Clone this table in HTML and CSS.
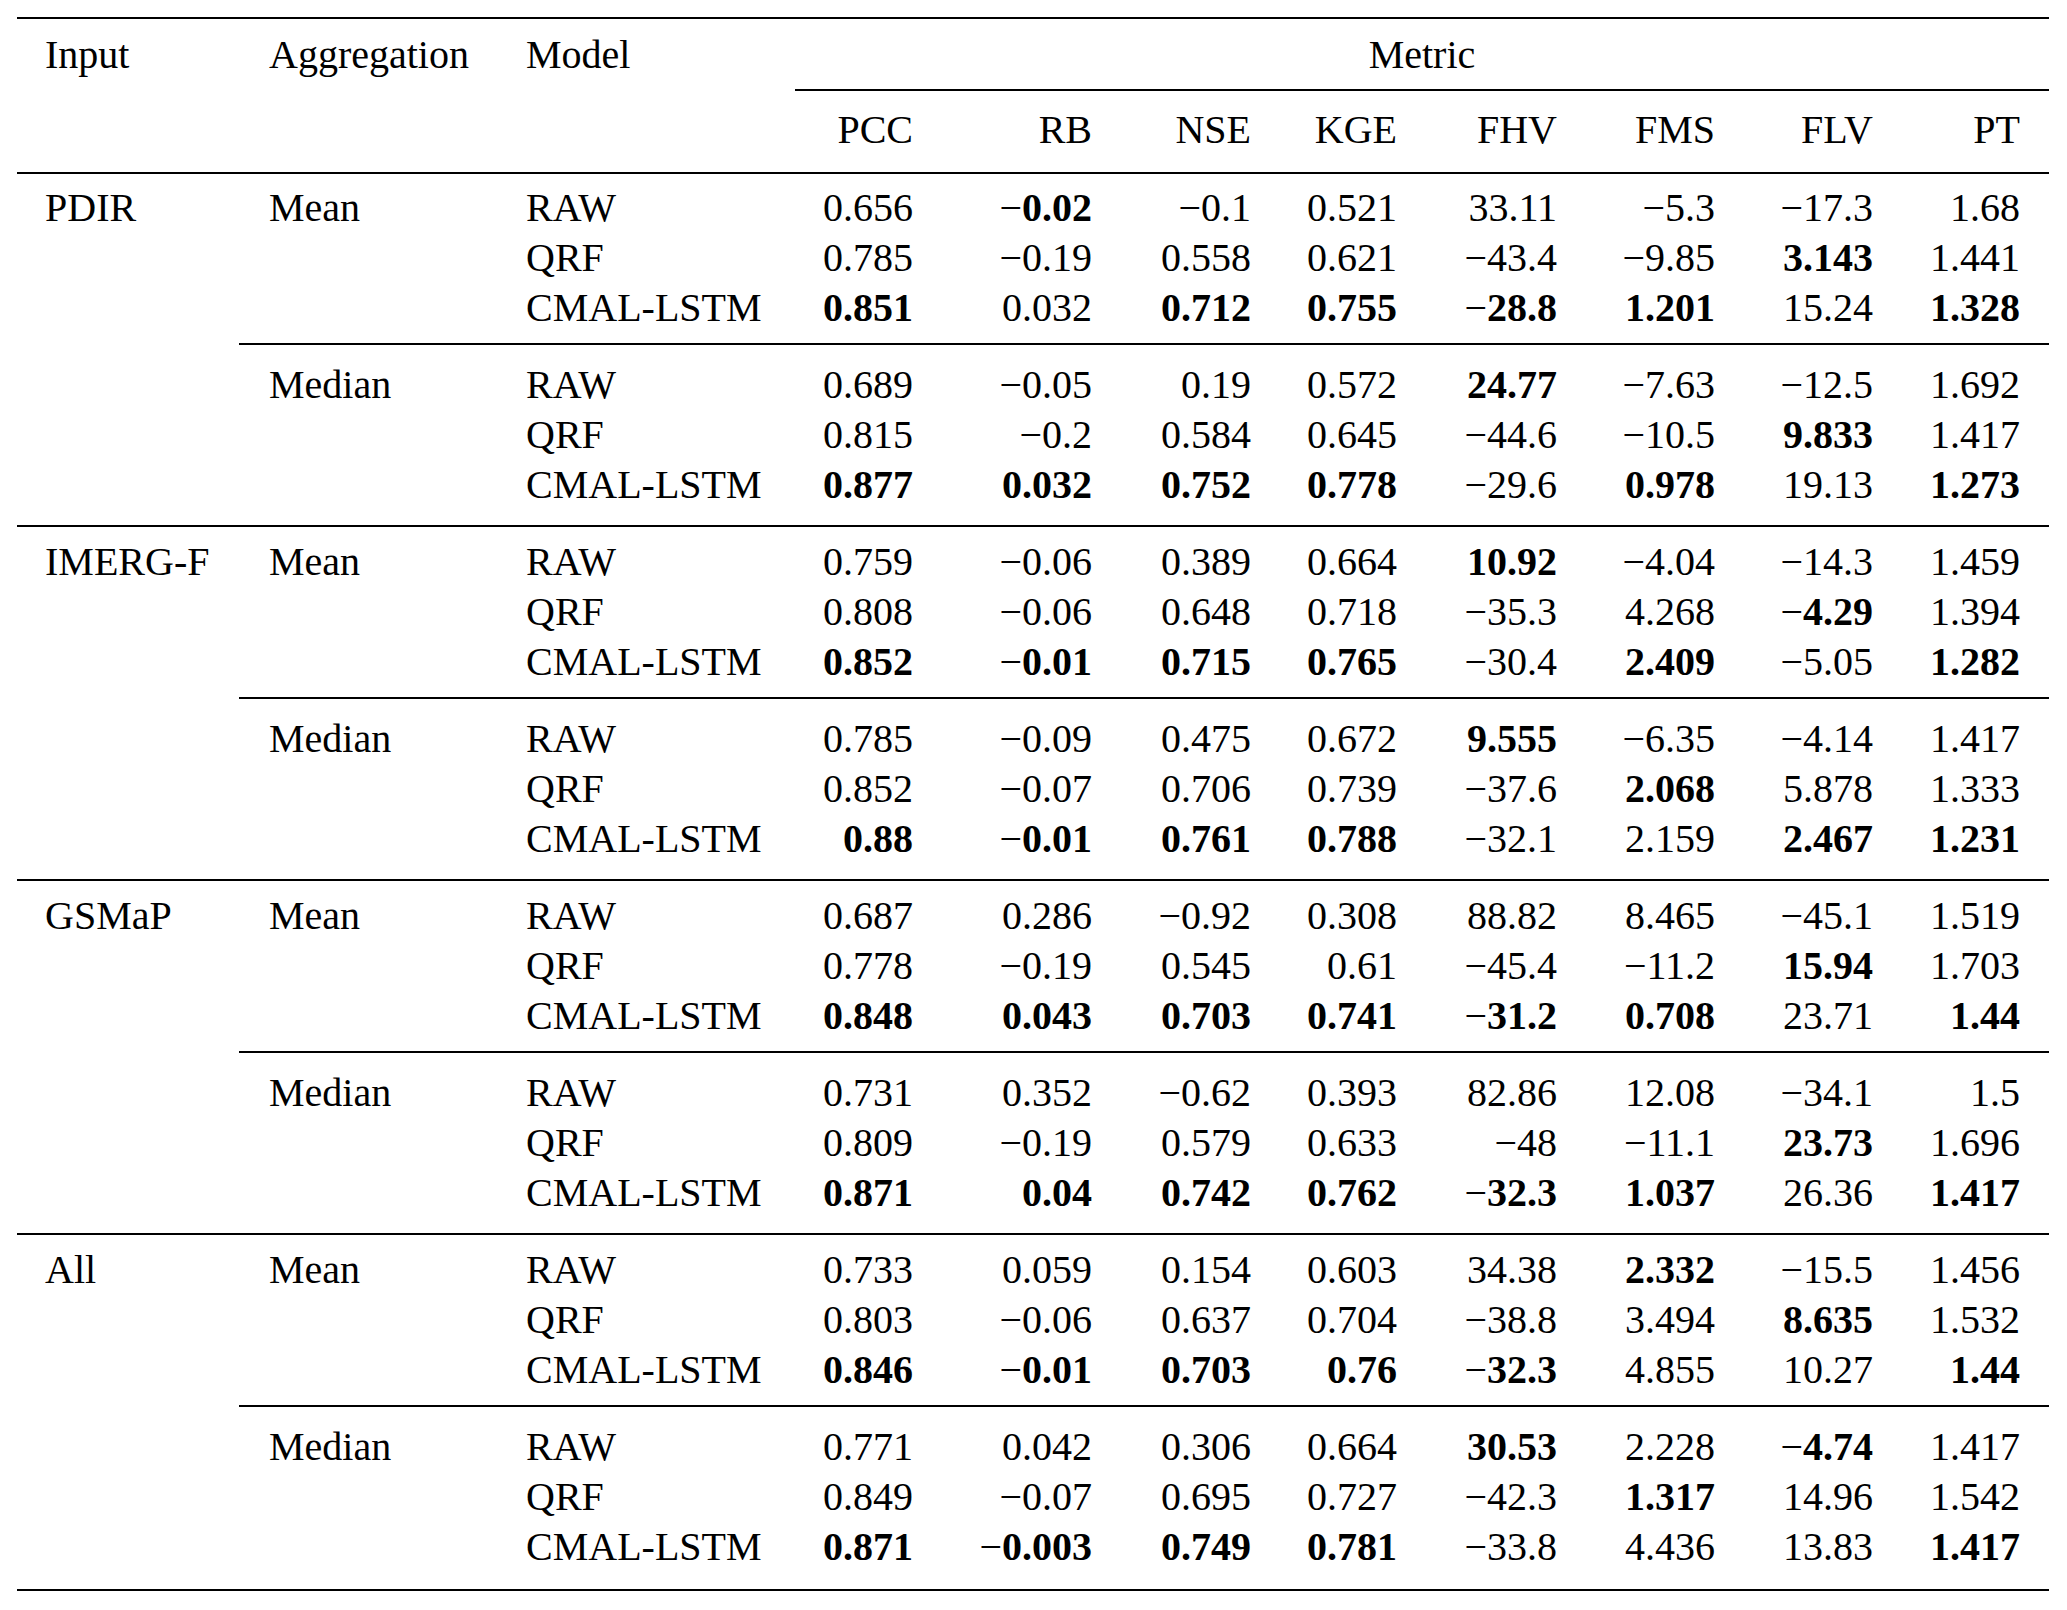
FILE: index.html
```html
<!DOCTYPE html>
<html lang="en">
<head>
<meta charset="utf-8">
<title>Metric table</title>
<link rel="stylesheet" href="styles.css">
</head>
<body>
<table class="tbl">
  <colgroup>
    <col class="w-input"><col class="w-agg"><col class="w-model">
    <col class="w-pcc"><col class="w-rb"><col class="w-nse"><col class="w-kge">
    <col class="w-fhv"><col class="w-fms"><col class="w-flv"><col class="w-pt">
  </colgroup>
  <thead>
    <tr class="h1">
      <th class="c1">Input</th><th class="c2">Aggregation</th><th class="c3">Model</th>
      <th class="metric" colspan="8">Metric</th>
    </tr>
    <tr class="h2">
      <th class="c1"></th><th class="c2"></th><th class="c3"></th>
      <th class="n">PCC</th><th class="n">RB</th><th class="n">NSE</th><th class="n">KGE</th>
      <th class="n">FHV</th><th class="n">FMS</th><th class="n">FLV</th><th class="n last-col">PT</th>
    </tr>
  </thead>
  <tbody>
    <!-- PDIR -->
    <tr class="first">
      <td class="c1">PDIR</td><td class="c2">Mean</td><td class="c3">RAW</td>
      <td class="n">0.656</td><td class="n">−<b>0.02</b></td><td class="n">−0.1</td><td class="n">0.521</td><td class="n">33.11</td><td class="n">−5.3</td><td class="n">−17.3</td><td class="n last-col">1.68</td>
    </tr>
    <tr>
      <td class="c1"></td><td class="c2"></td><td class="c3">QRF</td>
      <td class="n">0.785</td><td class="n">−0.19</td><td class="n">0.558</td><td class="n">0.621</td><td class="n">−43.4</td><td class="n">−9.85</td><td class="n"><b>3.143</b></td><td class="n last-col">1.441</td>
    </tr>
    <tr class="pre-cmid">
      <td class="c1"></td><td class="c2"></td><td class="c3">CMAL-LSTM</td>
      <td class="n"><b>0.851</b></td><td class="n">0.032</td><td class="n"><b>0.712</b></td><td class="n"><b>0.755</b></td><td class="n">−<b>28.8</b></td><td class="n"><b>1.201</b></td><td class="n">15.24</td><td class="n last-col"><b>1.328</b></td>
    </tr>
    <tr class="cmid">
      <td class="c1"></td><td class="c2">Median</td><td class="c3">RAW</td>
      <td class="n">0.689</td><td class="n">−0.05</td><td class="n">0.19</td><td class="n">0.572</td><td class="n"><b>24.77</b></td><td class="n">−7.63</td><td class="n">−12.5</td><td class="n last-col">1.692</td>
    </tr>
    <tr>
      <td class="c1"></td><td class="c2"></td><td class="c3">QRF</td>
      <td class="n">0.815</td><td class="n">−0.2</td><td class="n">0.584</td><td class="n">0.645</td><td class="n">−44.6</td><td class="n">−10.5</td><td class="n"><b>9.833</b></td><td class="n last-col">1.417</td>
    </tr>
    <tr class="pre-mid">
      <td class="c1"></td><td class="c2"></td><td class="c3">CMAL-LSTM</td>
      <td class="n"><b>0.877</b></td><td class="n"><b>0.032</b></td><td class="n"><b>0.752</b></td><td class="n"><b>0.778</b></td><td class="n">−29.6</td><td class="n"><b>0.978</b></td><td class="n">19.13</td><td class="n last-col"><b>1.273</b></td>
    </tr>
    <!-- IMERG-F -->
    <tr class="mid">
      <td class="c1">IMERG-F</td><td class="c2">Mean</td><td class="c3">RAW</td>
      <td class="n">0.759</td><td class="n">−0.06</td><td class="n">0.389</td><td class="n">0.664</td><td class="n"><b>10.92</b></td><td class="n">−4.04</td><td class="n">−14.3</td><td class="n last-col">1.459</td>
    </tr>
    <tr>
      <td class="c1"></td><td class="c2"></td><td class="c3">QRF</td>
      <td class="n">0.808</td><td class="n">−0.06</td><td class="n">0.648</td><td class="n">0.718</td><td class="n">−35.3</td><td class="n">4.268</td><td class="n">−<b>4.29</b></td><td class="n last-col">1.394</td>
    </tr>
    <tr class="pre-cmid">
      <td class="c1"></td><td class="c2"></td><td class="c3">CMAL-LSTM</td>
      <td class="n"><b>0.852</b></td><td class="n">−<b>0.01</b></td><td class="n"><b>0.715</b></td><td class="n"><b>0.765</b></td><td class="n">−30.4</td><td class="n"><b>2.409</b></td><td class="n">−5.05</td><td class="n last-col"><b>1.282</b></td>
    </tr>
    <tr class="cmid">
      <td class="c1"></td><td class="c2">Median</td><td class="c3">RAW</td>
      <td class="n">0.785</td><td class="n">−0.09</td><td class="n">0.475</td><td class="n">0.672</td><td class="n"><b>9.555</b></td><td class="n">−6.35</td><td class="n">−4.14</td><td class="n last-col">1.417</td>
    </tr>
    <tr>
      <td class="c1"></td><td class="c2"></td><td class="c3">QRF</td>
      <td class="n">0.852</td><td class="n">−0.07</td><td class="n">0.706</td><td class="n">0.739</td><td class="n">−37.6</td><td class="n"><b>2.068</b></td><td class="n">5.878</td><td class="n last-col">1.333</td>
    </tr>
    <tr class="pre-mid">
      <td class="c1"></td><td class="c2"></td><td class="c3">CMAL-LSTM</td>
      <td class="n"><b>0.88</b></td><td class="n">−<b>0.01</b></td><td class="n"><b>0.761</b></td><td class="n"><b>0.788</b></td><td class="n">−32.1</td><td class="n">2.159</td><td class="n"><b>2.467</b></td><td class="n last-col"><b>1.231</b></td>
    </tr>
    <!-- GSMaP -->
    <tr class="mid">
      <td class="c1">GSMaP</td><td class="c2">Mean</td><td class="c3">RAW</td>
      <td class="n">0.687</td><td class="n">0.286</td><td class="n">−0.92</td><td class="n">0.308</td><td class="n">88.82</td><td class="n">8.465</td><td class="n">−45.1</td><td class="n last-col">1.519</td>
    </tr>
    <tr>
      <td class="c1"></td><td class="c2"></td><td class="c3">QRF</td>
      <td class="n">0.778</td><td class="n">−0.19</td><td class="n">0.545</td><td class="n">0.61</td><td class="n">−45.4</td><td class="n">−11.2</td><td class="n"><b>15.94</b></td><td class="n last-col">1.703</td>
    </tr>
    <tr class="pre-cmid">
      <td class="c1"></td><td class="c2"></td><td class="c3">CMAL-LSTM</td>
      <td class="n"><b>0.848</b></td><td class="n"><b>0.043</b></td><td class="n"><b>0.703</b></td><td class="n"><b>0.741</b></td><td class="n">−<b>31.2</b></td><td class="n"><b>0.708</b></td><td class="n">23.71</td><td class="n last-col"><b>1.44</b></td>
    </tr>
    <tr class="cmid">
      <td class="c1"></td><td class="c2">Median</td><td class="c3">RAW</td>
      <td class="n">0.731</td><td class="n">0.352</td><td class="n">−0.62</td><td class="n">0.393</td><td class="n">82.86</td><td class="n">12.08</td><td class="n">−34.1</td><td class="n last-col">1.5</td>
    </tr>
    <tr>
      <td class="c1"></td><td class="c2"></td><td class="c3">QRF</td>
      <td class="n">0.809</td><td class="n">−0.19</td><td class="n">0.579</td><td class="n">0.633</td><td class="n">−48</td><td class="n">−11.1</td><td class="n"><b>23.73</b></td><td class="n last-col">1.696</td>
    </tr>
    <tr class="pre-mid">
      <td class="c1"></td><td class="c2"></td><td class="c3">CMAL-LSTM</td>
      <td class="n"><b>0.871</b></td><td class="n"><b>0.04</b></td><td class="n"><b>0.742</b></td><td class="n"><b>0.762</b></td><td class="n">−<b>32.3</b></td><td class="n"><b>1.037</b></td><td class="n">26.36</td><td class="n last-col"><b>1.417</b></td>
    </tr>
    <!-- All -->
    <tr class="mid">
      <td class="c1">All</td><td class="c2">Mean</td><td class="c3">RAW</td>
      <td class="n">0.733</td><td class="n">0.059</td><td class="n">0.154</td><td class="n">0.603</td><td class="n">34.38</td><td class="n"><b>2.332</b></td><td class="n">−15.5</td><td class="n last-col">1.456</td>
    </tr>
    <tr>
      <td class="c1"></td><td class="c2"></td><td class="c3">QRF</td>
      <td class="n">0.803</td><td class="n">−0.06</td><td class="n">0.637</td><td class="n">0.704</td><td class="n">−38.8</td><td class="n">3.494</td><td class="n"><b>8.635</b></td><td class="n last-col">1.532</td>
    </tr>
    <tr class="pre-cmid">
      <td class="c1"></td><td class="c2"></td><td class="c3">CMAL-LSTM</td>
      <td class="n"><b>0.846</b></td><td class="n">−<b>0.01</b></td><td class="n"><b>0.703</b></td><td class="n"><b>0.76</b></td><td class="n">−<b>32.3</b></td><td class="n">4.855</td><td class="n">10.27</td><td class="n last-col"><b>1.44</b></td>
    </tr>
    <tr class="cmid">
      <td class="c1"></td><td class="c2">Median</td><td class="c3">RAW</td>
      <td class="n">0.771</td><td class="n">0.042</td><td class="n">0.306</td><td class="n">0.664</td><td class="n"><b>30.53</b></td><td class="n">2.228</td><td class="n">−<b>4.74</b></td><td class="n last-col">1.417</td>
    </tr>
    <tr>
      <td class="c1"></td><td class="c2"></td><td class="c3">QRF</td>
      <td class="n">0.849</td><td class="n">−0.07</td><td class="n">0.695</td><td class="n">0.727</td><td class="n">−42.3</td><td class="n"><b>1.317</b></td><td class="n">14.96</td><td class="n last-col">1.542</td>
    </tr>
    <tr class="last">
      <td class="c1"></td><td class="c2"></td><td class="c3">CMAL-LSTM</td>
      <td class="n"><b>0.871</b></td><td class="n">−<b>0.003</b></td><td class="n"><b>0.749</b></td><td class="n"><b>0.781</b></td><td class="n">−33.8</td><td class="n">4.436</td><td class="n">13.83</td><td class="n last-col"><b>1.417</b></td>
    </tr>
  </tbody>
</table>
</body>
</html>
```

FILE: styles.css
```css
html, body {
  margin: 0;
  background: #ffffff;
}

body {
  padding: 17px 18px 0 17px;
  font-family: "Liberation Serif", "Times New Roman", Times, serif;
  font-size: 40px;
  color: #000000;
}

.tbl {
  border-collapse: separate;
  border-spacing: 0;
  table-layout: fixed;
  width: 2032px;
}

.w-input { width: 222px; }
.w-agg   { width: 259px; }
.w-model { width: 297px; }
.w-pcc   { width: 118px; }
.w-rb    { width: 179px; }
.w-nse   { width: 159px; }
.w-kge   { width: 146px; }
.w-fhv   { width: 160px; }
.w-fms   { width: 158px; }
.w-flv   { width: 158px; }
.w-pt    { width: 176px; }

.tbl th,
.tbl td {
  padding: 0;
  line-height: 50px;
  font-weight: normal;
  vertical-align: top;
  white-space: nowrap;
  text-align: left;
}

.tbl b { font-weight: bold; }

.tbl .c1 { padding-left: 28px; }
.tbl .c2 { padding-left: 30px; }
.tbl .c3 { padding-left: 28px; }
.tbl .n  { text-align: right; }
.tbl .last-col { padding-right: 29px; }

/* header */
.h1 th {
  border-top: 2px solid #000;
  padding-top: 11px;
  padding-bottom: 9px;
}
.h1 th.metric {
  text-align: center;
  border-bottom: 2px solid #000;
}
.h2 th {
  padding-top: 14px;
  padding-bottom: 17px;
  border-bottom: 2px solid #000;
}

/* body spacing and rules */
tr.first td { padding-top: 9px; }

tr.pre-cmid td { padding-bottom: 10px; }
tr.cmid td { padding-top: 15px; }
tr.cmid td:not(.c1) { border-top: 2px solid #000; }

tr.pre-mid td { padding-bottom: 15px; }
tr.mid td {
  padding-top: 10px;
  border-top: 2px solid #000;
}

tr.last td {
  padding-bottom: 17px;
  border-bottom: 2px solid #000;
}
```
